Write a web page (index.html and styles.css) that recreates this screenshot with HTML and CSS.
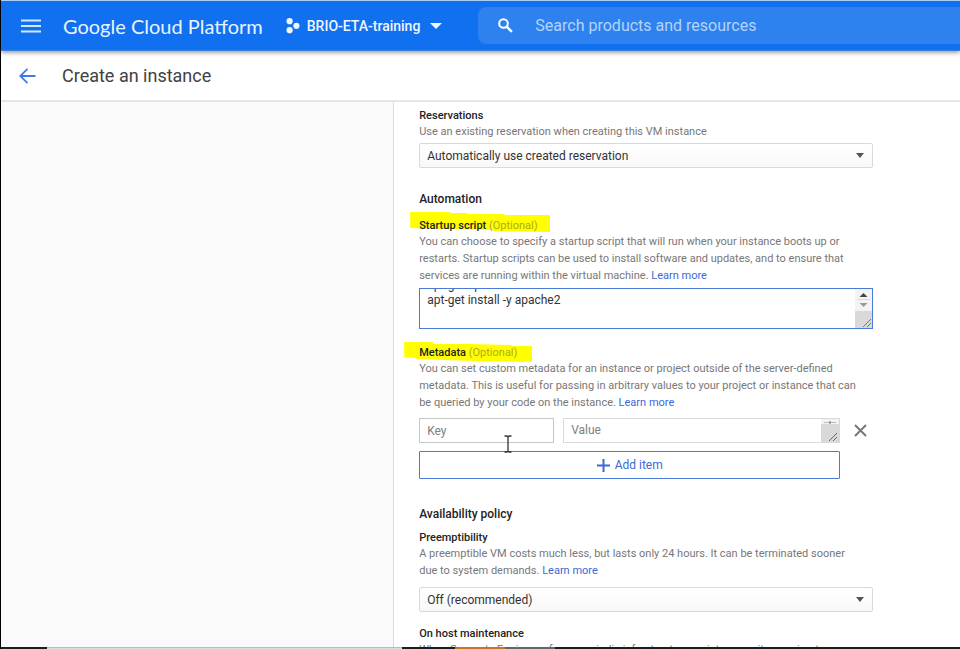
FILE: index.html
```html
<!DOCTYPE html>
<html lang="en">
<head>
<meta charset="utf-8">
<title>Create an instance</title>
<link rel="stylesheet" href="styles.css">
</head>
<body>
<header class="topbar">
  <button class="icon-button menu" aria-label="Menu"><svg width="20" height="14" viewBox="0 0 20 14"><path d="M0 1.5h20M0 7h20M0 12.5h20" stroke="currentColor" stroke-width="2"/></svg></button>
  <a class="brand" href="#">Google Cloud Platform</a>
  <button class="project">
    <svg width="14" height="16" viewBox="0 0 14 16" fill="currentColor"><circle cx="3.6" cy="3.2" r="3.1"/><circle cx="3.6" cy="12.2" r="3.1"/><circle cx="10.4" cy="7.8" r="3.1"/></svg>
    <span>BRIO-ETA-training</span>
    <svg class="caret" width="12" height="6" viewBox="0 0 12 6"><path d="M0 0h12L6 6z" fill="currentColor"/></svg>
  </button>
  <label class="search">
    <svg width="15" height="15" viewBox="0 0 15 15" fill="none" stroke="currentColor" stroke-width="2"><circle cx="5.5" cy="5.5" r="4.3"/><path d="M8.7 8.7l5.2 5.2" stroke-width="2.4"/></svg>
    <input type="text" placeholder="Search products and resources" aria-label="Search products and resources">
  </label>
</header>
<div class="titlebar">
  <a class="back" href="#" aria-label="Back"><svg width="17" height="16" viewBox="0 0 17 16" fill="none" stroke="currentColor" stroke-width="1.8"><path d="M16.500 8H1.500M8.500 .8L1.300 8l7.200 7.200"/></svg></a>
  <h1>Create an instance</h1>
</div>
<div class="content">
  <aside class="side"></aside>
  <main class="main">
    <form class="form">
      <section class="field">
        <label class="label" for="reservations">Reservations</label>
        <p class="help">Use an existing reservation when creating this VM instance</p>
        <div class="select-box"><select id="reservations"><option>Automatically use created reservation</option></select></div>
      </section>

      <h2>Automation</h2>
      <section class="field">
        <label class="label marked startup" for="startup">Startup script <span class="optional">(Optional)</span></label>
        <p class="help">You can choose to specify a startup script that will run when your instance boots up or restarts. Startup scripts can be used to install software and updates, and to ensure that services are running within the virtual machine. <a href="#">Learn more</a></p>
        <div class="script-box">
          <textarea id="startup" spellcheck="false">#! /bin/bash
apt-get update
apt-get install -y apache2

</textarea>
          <svg class="scroller" width="17" height="39" viewBox="0 0 17 39"><path fill="#f3f3f3" d="M0 0h17v39H0z"/><path fill="#d9d9d9" d="M0 22h17v17H0zM2 10h13v1H2z"/><path fill="#444" d="M8.500 4l4 4h-8z"/><path fill="#999" d="M8.500 18l4-4h-8z"/><path d="M8 38l8-8M12 38l4-4" stroke="#777"/></svg>
        </div>
      </section>

      <section class="field metadata-field">
        <label class="label marked metadata" for="key">Metadata <span class="optional">(Optional)</span></label>
        <p class="help">You can set custom metadata for an instance or project outside of the server-defined metadata. This is useful for passing in arbitrary values to your project or instance that can be queried by your code on the instance. <a href="#">Learn more</a></p>
        <div class="pair">
          <input id="key" class="key" type="text" placeholder="Key">
          <div class="value-box">
            <textarea placeholder="Value" aria-label="Value"></textarea>
            <svg class="scroller" width="18" height="23" viewBox="0 0 18 23"><path fill="#f3f3f3" d="M0 0h18v6H0z"/><path fill="#d9d9d9" d="M0 5h18v18H0z"/><path stroke="#bbb" d="M3 3.500h12"/><path stroke="#666" d="M9 2v3"/><path d="M8 22l8-8M12 22l4-4" stroke="#666"/></svg>
          </div>
          <button class="icon-button remove" type="button" aria-label="Remove item"><svg width="13" height="13" viewBox="0 0 13 13"><path d="M1 1l11 11M12 1L1 12" stroke="currentColor" stroke-width="2"/></svg></button>
          <svg class="pointer" width="8" height="18" viewBox="0 0 8 18" fill="none" stroke="#333"><path d="M.5 1h2.500L4 2l1-1h2.500M4 2v14M.5 17h2.500l1-1 1 1h2.500" stroke-width="1.300"/></svg>
        </div>
        <button class="add" type="button"><svg width="13" height="13" viewBox="0 0 13 13"><path d="M6.500 0v13M0 6.500h13" stroke="currentColor" stroke-width="2"/></svg>Add item</button>
      </section>

      <h2>Availability policy</h2>
      <section class="field">
        <label class="label" for="preempt">Preemptibility</label>
        <p class="help">A preemptible VM costs much less, but lasts only 24 hours. It can be terminated sooner due to system demands. <a href="#">Learn more</a></p>
        <div class="select-box spaced"><select id="preempt"><option>Off (recommended)</option></select></div>
      </section>
      <section class="field host">
        <h3 class="label">On host maintenance</h3>
        <p class="help">When Compute Engine performs periodic infrastructure maintenance it can migrate your</p>
      </section>
    </form>
  </main>
</div>
<footer class="strip"><i class="dark first"></i><i class="light"></i><i class="dark"></i><i class="orange"></i><i class="gray"></i><i class="dark rest"></i></footer>
<script>
document.getElementById("startup").scrollTop = 30;
</script>
</body>
</html>
```

FILE: styles.css
```css
* { box-sizing: border-box; }
body {
  margin: 0;
  height: 100vh;
  display: flex;
  flex-direction: column;
  overflow: hidden;
  border-left: 1px solid #000;
  background: #fff;
  color: #333;
  font: 12px/16px Roboto, "Liberation Sans", sans-serif;
}
button, input, select, textarea { font: inherit; color: inherit; margin: 0; }
h1, h2, h3, p { margin: 0; }
a { color: #3b68d8; text-decoration: none; }
svg { display: block; flex: none; }

.topbar {
  position: relative;
  flex: none;
  display: flex;
  align-items: center;
  height: 51px;
  border-top: 1px solid #a9cdf5;
  border-bottom: 1px solid #3a7fdd;
  padding-left: 20px;
  background: #1170f0;
  color: #fff;
  box-shadow: 0 1px 5px rgba(0, 0, 0, .5);
}
.icon-button { padding: 0; border: 0; background: none; }
.menu { color: #d5e7ff; }
.brand {
  margin-left: 22px;
  color: #e9f3ff;
  font: 20px/24px Lato, sans-serif;
  white-space: nowrap;
}
.project {
  display: flex;
  align-items: center;
  gap: 7px;
  margin-left: 23px;
  padding: 0;
  border: 0;
  background: none;
  color: #f0f6ff;
  font-size: 14px;
  font-weight: 500;
  white-space: nowrap;
}
.caret { margin-left: 3px; }
.search {
  flex: 1;
  display: flex;
  align-items: center;
  gap: 22px;
  height: 37px;
  margin-left: 36px;
  padding-left: 20px;
  border-radius: 8px 0 0 8px;
  background: #2e82f0;
}
.search input {
  flex: 1;
  min-width: 0;
  padding: 0;
  border: 0;
  background: none;
  font-size: 16px;
}
.search input::placeholder { color: #b4d3fa; opacity: 1; }

.titlebar {
  flex: none;
  display: flex;
  align-items: center;
  gap: 26px;
  height: 51px;
  padding-left: 18px;
  border-bottom: 2px solid #e6e6e6;
}
.back { color: #3f7ce8; }
h1 { font-size: 18px; line-height: 24px; font-weight: 400; color: #424242; }

.content { flex: 1; min-height: 0; display: flex; overflow: hidden; }
.side { flex: 0 0 41%; background: #fafafa; border-right: 1px solid #ddd; }
.main { flex: 1; padding: 6px 24px 0 25px; }
.form { max-width: 454px; }

h2 { margin: 23px 0 11px; font-size: 12px; line-height: 16px; font-weight: 500; color: #222; }
.label { display: block; font-size: 11px; line-height: 15px; font-weight: 500; color: #222; }
.help { padding-right: 12px; font-size: 11px; line-height: 17px; color: #777; }
.select-box { position: relative; margin-top: 3px; }
.select-box.spaced { margin-top: 8px; }
.select-box::after {
  content: "";
  position: absolute;
  right: 9px;
  top: 10px;
  border: 4px solid transparent;
  border-top: 5px solid #555;
  border-bottom: 0;
}
select {
  display: block;
  width: 100%;
  height: 25px;
  padding: 0 7px;
  border: 1px solid #d9d9d9;
  border-radius: 2px;
  appearance: none;
  background: linear-gradient(#fff, #f8f8f8);
  font-size: 12px;
  color: #333;
}

.marked { position: relative; z-index: 0; }
.marked::before {
  content: "";
  position: absolute;
  z-index: -1;
  background: #ff0;
}
.startup::before {
  left: -9px;
  top: -6px;
  width: 140px;
  height: 20px;
  clip-path: polygon(0 0, 40px 0, 40px 1px, 57px 1px, 57px 2px, 94px 2px, 94px 3px, 100% 3px, 100% 20px, 83px 19px, 83px 18px, 40px 17px, 0 16px);
}
.metadata::before {
  left: -15px;
  top: -3px;
  width: 128px;
  height: 20px;
  clip-path: polygon(0 0, 29px 0, 29px 2px, 64px 2px, 108px 3px, 108px 4px, 100% 4px, 100% 20px, 72px 19px, 40px 18px, 12px 17px, 12px 16px, 0 15px);
}
.optional { font-weight: 400; }
.marked .optional { color: #b0a820; }

.script-box { position: relative; height: 41px; margin-top: 4px; border: 1px solid #4a7ad8; }
textarea {
  display: block;
  width: 100%;
  height: 100%;
  padding: 4px 24px 4px 7px;
  border: 0;
  outline: 0;
  resize: none;
  overflow: hidden;
  background: transparent;
  font-size: 12px;
  line-height: 15px;
}
.scroller { position: absolute; right: 0; top: 0; }

.metadata-field { margin-top: 16px; }
.pair { position: relative; display: flex; align-items: center; gap: 9px; margin-top: 7px; }
.key { width: 135px; height: 25px; padding: 0 7px; border: 1px solid #c6c6c6; font-size: 12px; }
.value-box { position: relative; flex: 1; height: 25px; border: 1px solid #d9d9d9; }
.key::placeholder, .value-box textarea::placeholder { color: #808080; opacity: 1; }
.remove { margin: 0 6px 0 5px; color: #777; }
.pointer { position: absolute; left: 85px; top: 17px; }
.add {
  display: flex;
  align-items: center;
  justify-content: center;
  gap: 5px;
  width: calc(100% - 33px);
  height: 28px;
  margin-top: 8px;
  padding: 0;
  border: 1px solid #4a7ad8;
  border-radius: 1px;
  background: #fff;
  color: #3b68d8;
  font-size: 12px;
}
.metadata-field + h2 { margin-top: 27px; margin-bottom: 8px; }
.host { margin-top: 14px; }

.strip { flex: none; display: flex; height: 2px; }
.dark { flex: 0 0 53px; background: #211c1c; }
.first { flex-basis: 46px; }
.light { flex: 0 0 355px; background: #ddd; border-top: 1px solid #bbb; }
.orange { flex: 0 0 50px; background: #c87328; }
.gray { flex: 0 0 50px; background: #666; }
.rest { flex: 1; }
```
